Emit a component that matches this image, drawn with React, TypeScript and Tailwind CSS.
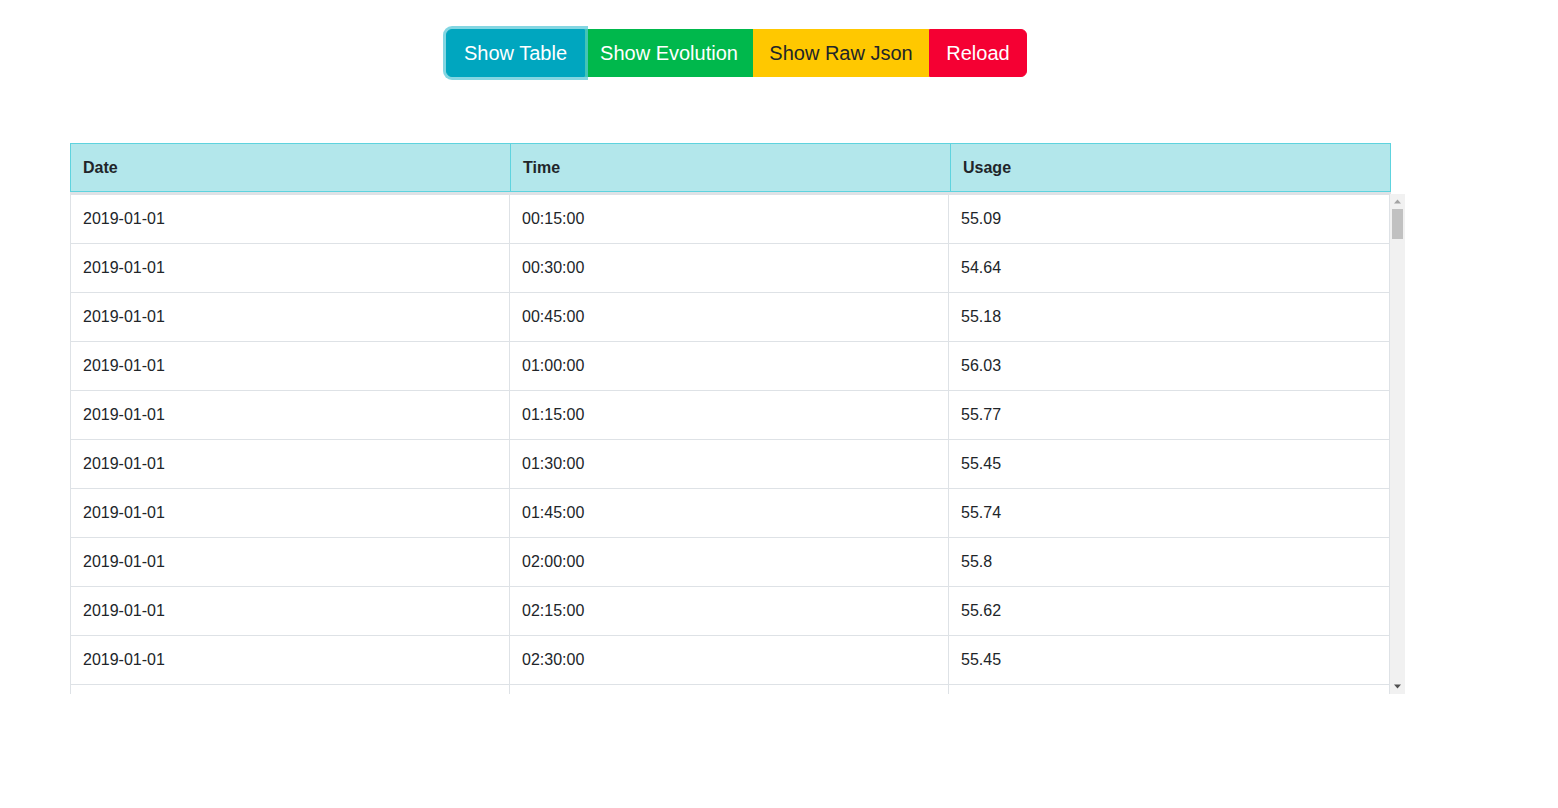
import React from 'react';

const usages = [55.09, 54.64, 55.18, 56.03, 55.77, 55.45, 55.74, 55.8, 55.62, 55.45];

const rows = usages.map((u, idx) => {
  const minutes = (idx + 1) * 15;
  const hh = String(Math.floor(minutes / 60)).padStart(2, '0');
  const mm = String(minutes % 60).padStart(2, '0');
  return { date: '2019-01-01', time: `${hh}:${mm}:00`, usage: String(u) };
});

function Scrollbar() {
  return (
    <div className="w-[15px] h-[500px] bg-[#f1f1f1] flex flex-col items-center">
      <svg width="15" height="15" viewBox="0 0 15 15" className="shrink-0">
        <path d="M4 9.5 L7.5 5.5 L11 9.5 Z" fill="#a3a3a3" />
      </svg>
      <div className="w-[11px] h-[30px] bg-[#c1c1c1]" />
      <div className="flex-1" />
      <svg width="15" height="15" viewBox="0 0 15 15" className="shrink-0">
        <path d="M4 5.5 L11 5.5 L7.5 9.5 Z" fill="#505050" />
      </svg>
    </div>
  );
}

export default function App() {
  return (
    <div className="min-h-screen bg-white font-['Liberation_Sans',Arial,sans-serif] text-[#212529]">
      {/* Buttons */}
      <div className="ml-[70px] w-[1333px] pt-[29px] flex justify-center">
        <div className="flex">
          <button className="relative z-10 h-12 w-[139px] text-xl text-white bg-[#00a6bf] border border-[#00a6bf] rounded-l-md shadow-[0_0_0_3px_rgba(90,200,216,0.75)]">
            Show Table
          </button>
          <button className="h-12 w-[168px] text-xl text-white bg-[#00b84c] border border-[#00b84c]">
            Show Evolution
          </button>
          <button className="h-12 w-[176px] text-xl text-[#212529] bg-[#ffc800] border border-[#ffc800]">
            Show Raw Json
          </button>
          <button className="h-12 w-[98px] text-xl text-white bg-[#f50033] border border-[#f50033] rounded-r-md">
            Reload
          </button>
        </div>
      </div>

      {/* Table */}
      <div className="ml-[70px] mt-[66px] w-[1335px]">
        <div className="w-[1321px] h-[49px] grid grid-cols-[439px_440px_1fr] bg-[#b3e7eb] border border-[#5ed3de] font-bold">
          <div className="flex items-center px-3">Date</div>
          <div className="flex items-center px-3 border-l border-[#5ed3de]">Time</div>
          <div className="flex items-center px-3 border-l border-[#5ed3de]">Usage</div>
        </div>
        <div className="w-[1321px] h-[2px] bg-[#dee2e6]" />
        <div className="flex h-[500px]">
          <div className="w-[1320px] overflow-hidden">
            {rows.map((r, i) => (
              <div key={i} className="grid grid-cols-[439px_439px_1fr] border-t border-[#dee2e6]">
                <div className="px-3 py-3 leading-6 border-l border-[#dee2e6]">{r.date}</div>
                <div className="px-3 py-3 leading-6 border-l border-[#dee2e6]">{r.time}</div>
                <div className="px-3 py-3 leading-6 border-l border-r border-[#dee2e6]">{r.usage}</div>
              </div>
            ))}
            <div className="grid grid-cols-[439px_439px_1fr] border-t border-[#dee2e6] h-12">
              <div className="border-l border-[#dee2e6]" />
              <div className="border-l border-[#dee2e6]" />
              <div className="border-l border-r border-[#dee2e6]" />
            </div>
          </div>
          <Scrollbar />
        </div>
      </div>
    </div>
  );
}
